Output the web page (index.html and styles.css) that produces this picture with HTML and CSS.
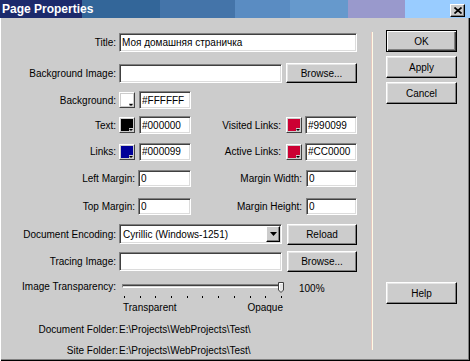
FILE: index.html
```html
<!DOCTYPE html>
<html lang="ru">
<head>
  <meta charset="UTF-8">
  <title>Page Properties</title>
  <link rel="stylesheet" href="styles.css">
</head>
<body>

  <div class="dialog">
    <div class="titlebar">
      <span class="title">Page Properties</span>
      <span class="close">
        <svg width="8" height="7" viewBox="0 0 8 7"><path d="M0.5 0.5L7.5 6.5M7.5 0.5L0.5 6.5" stroke="#000" stroke-width="1.7"/></svg>
      </span>
    </div>

    <div class="content">
      <div class="props">
        <label class="lbl">Title:</label>
        <input class="field title-field" value="Моя домашняя страничка">

        <label class="lbl">Background Image:</label>
        <input class="field path" value="">
        <button class="btn browse">Browse...</button>

        <label class="lbl">Background:</label>
        <span class="swatch"><span class="chip c-white"></span></span>
        <input class="field hex" value="#FFFFFF">

        <label class="lbl">Text:</label>
        <span class="swatch"><span class="chip c-black"></span></span>
        <input class="field hex" value="#000000">
        <label class="lbl lbl-r">Visited Links:</label>
        <span class="swatch swatch-r"><span class="chip c-red"></span></span>
        <input class="field hex hex-r" value="#990099">

        <label class="lbl">Links:</label>
        <span class="swatch"><span class="chip c-blue"></span></span>
        <input class="field hex" value="#000099">
        <label class="lbl lbl-r">Active Links:</label>
        <span class="swatch swatch-r"><span class="chip c-red"></span></span>
        <input class="field hex hex-r" value="#CC0000">

        <label class="lbl lbl-wide">Left Margin:</label>
        <input class="field num" value="0">
        <label class="lbl lbl-wide-r">Margin Width:</label>
        <input class="field num-r" value="0">

        <label class="lbl lbl-wide">Top Margin:</label>
        <input class="field num" value="0">
        <label class="lbl lbl-wide-r">Margin Height:</label>
        <input class="field num-r" value="0">

        <label class="lbl">Document Encoding:</label>
        <div class="field select">
          <span>Cyrillic (Windows-1251)</span>
          <span class="drop">
            <svg width="7" height="4" viewBox="0 0 7 4"><path d="M0 0H7L3.5 4Z" fill="#000"/></svg>
          </span>
        </div>
        <button class="btn side-btn">Reload</button>

        <label class="lbl">Tracing Image:</label>
        <input class="field path" value="">
        <button class="btn side-btn">Browse...</button>

        <label class="lbl">Image Transparency:</label>
        <div class="slider">
          <div class="track"></div>
          <div class="ticks">
            <span></span><span></span><span></span><span></span><span></span><span></span>
            <span></span><span></span><span></span><span></span><span></span>
          </div>
          <svg class="thumb" width="6" height="11" viewBox="0 0 6 11">
            <path d="M0.5 8V0.5H5.5V8L3 10.5Z" fill="#e4e4e4" stroke="#404040"/>
            <path d="M1.5 8V1.5H4.5" fill="none" stroke="#fff"/>
          </svg>
        </div>
        <span class="pct">100%</span>

        <div class="scale-labels">
          <span>Transparent</span>
          <span>Opaque</span>
        </div>

        <label class="lbl lbl-folder">Document Folder:</label>
        <span class="folder">E:\Projects\WebProjects\Test\</span>

        <label class="lbl lbl-folder">Site Folder:</label>
        <span class="folder">E:\Projects\WebProjects\Test\</span>
      </div>

      <div class="sep"></div>

      <div class="actions">
        <button class="btn btn-default">OK</button>
        <button class="btn">Apply</button>
        <button class="btn">Cancel</button>
        <button class="btn help">Help</button>
      </div>
    </div>
  </div>

</body>
</html>
```

FILE: styles.css
```css
body {
  margin: 0;
  font-family: "Liberation Sans", Arial, sans-serif;
  font-size: 10px;
  color: #000;
  background: #cccccc;
}

.dialog {
  width: 470px;
  height: 361px;
  background: #cccccc;
  display: flex;
  flex-direction: column;
  overflow: hidden;
}

.titlebar {
  height: 18px;
  display: flex;
  align-items: center;
  background: linear-gradient(to right,
    #1c2a6c 0 82px,
    #336699 82px 160px,
    #4474a9 160px 235px,
    #5a8cc2 235px 290px,
    #6699cc 290px 348px,
    #9999cc 348px 405px,
    #99ccff 405px);
}

.title {
  font-size: 12px;
  font-weight: bold;
  color: #fff;
  padding-left: 2px;
}

.close {
  margin-left: auto;
  margin-right: 5px;
  align-self: flex-end;
  margin-bottom: 1px;
  width: 15px;
  height: 13px;
  box-sizing: border-box;
  background: #cccccc;
  border: 1px solid;
  border-color: #fff #000 #000 #fff;
  box-shadow: inset -1px -1px 0 #808080;
  display: flex;
  align-items: center;
  justify-content: center;
}

.content {
  flex: 1;
  display: flex;
  align-items: flex-start;
  box-shadow: inset 1px 0 0 #fff, inset -1px -1px 0 #000, inset -2px -2px 0 #808080;
}

.props {
  display: grid;
  grid-template-columns: 119px 19px 53px 95px 19px 52px;
  grid-template-rows: 32px 30px 24px 26px 27px 27px 28px 28px 26px 24px 18px 26px 16px;
  margin-top: 8px;
  align-items: center;
}

.lbl {
  grid-column: 1;
  text-align: right;
  padding-right: 3px;
  white-space: nowrap;
}

.lbl-r { grid-column: 4; padding-right: 5px; }
.lbl-wide { grid-column: 1 / 3; }
.lbl-wide-r { grid-column: 4 / 6; }
.lbl-folder { padding-right: 1px; }

.field {
  box-sizing: border-box;
  height: 18px;
  margin: 0;
  padding: 0 0 0 2px;
  background: #fff;
  border: 1px solid;
  border-color: #808080 #fff #fff #808080;
  box-shadow: inset 1px 1px 0 #404040, inset -1px -1px 0 #dcdcdc;
  font: inherit;
  color: #000;
  outline: none;
}

.title-field {
  grid-column: 2 / 7;
  width: 238px;
  height: 19px;
}

.path {
  grid-column: 2 / 5;
  width: 163px;
  height: 19px;
}

.hex {
  grid-column: 3;
  width: 52px;
  justify-self: end;
}

.hex-r { grid-column: 6; justify-self: start; }

.num {
  grid-column: 3;
  width: 53px;
  height: 17px;
}

.num-r {
  grid-column: 6;
  width: 51px;
  height: 17px;
  justify-self: end;
}

.swatch {
  grid-column: 2;
  position: relative;
  width: 16px;
  height: 16px;
  box-sizing: border-box;
  padding: 1px;
  background: #cccccc;
  border: 1px solid;
  border-color: #fff #404040 #404040 #fff;
}

.swatch-r { grid-column: 5; }

.chip {
  display: block;
  width: 12px;
  height: 12px;
}

.swatch::after {
  content: "";
  position: absolute;
  right: 0;
  bottom: 0;
  width: 5px;
  height: 4px;
  background: #cccccc;
}

.swatch::before {
  content: "";
  position: absolute;
  right: 1px;
  bottom: 1px;
  width: 0;
  height: 0;
  border-left: 2px solid transparent;
  border-right: 2px solid transparent;
  border-top: 2px solid #000;
  z-index: 1;
}

.c-white { background: #fff; }
.c-black { background: #000; }
.c-blue { background: #000099; }
.c-red { background: #cc0033; }

.btn {
  box-sizing: border-box;
  height: 22px;
  margin: 0;
  padding: 0;
  background: #cccccc;
  border: 1px solid;
  border-color: #fff #000 #000 #fff;
  box-shadow: inset -1px -1px 0 #808080, inset 1px 1px 0 #e6e6e6;
  font: inherit;
  color: #000;
}

.browse {
  grid-column: 5 / 7;
  width: 71px;
  height: 20px;
  justify-self: end;
}

.side-btn {
  grid-column: 5 / 7;
  width: 70px;
  height: 21px;
  justify-self: end;
}

.select {
  grid-column: 2 / 5;
  width: 163px;
  height: 20px;
  display: flex;
  align-items: center;
  padding-left: 3px;
}

.drop {
  margin-left: auto;
  margin-right: 1px;
  width: 14px;
  height: 16px;
  box-sizing: border-box;
  background: #cccccc;
  border: 1px solid;
  border-color: #fff #000 #000 #fff;
  box-shadow: inset -1px -1px 0 #808080;
  display: flex;
  align-items: center;
  justify-content: center;
}

.slider {
  grid-column: 2 / 5;
  position: relative;
  height: 24px;
  box-sizing: border-box;
  padding-top: 10px;
}

.track {
  margin-left: 3px;
  width: 160px;
  height: 4px;
  box-sizing: border-box;
  border: 1px solid;
  border-color: #808080 #fff #fff #808080;
  background: linear-gradient(#404040 0 1px, #d8d8d8 1px);
}

.ticks {
  display: flex;
  justify-content: space-between;
  width: 158px;
  margin-top: 8px;
  padding-left: 5px;
}

.ticks span {
  width: 1px;
  height: 2px;
  background: #000;
}

.thumb {
  position: absolute;
  left: 159px;
  top: 8px;
}

.pct {
  grid-column: 5 / 7;
  padding-left: 13px;
  padding-top: 5px;
}

.scale-labels {
  grid-column: 2 / 5;
  display: flex;
  justify-content: space-between;
  padding: 0 3px 0 4px;
}

.folder {
  grid-column: 2 / 7;
  white-space: nowrap;
}

.sep {
  width: 0;
  height: 318px;
  margin: 14px 0 0 14px;
  border-left: 1px solid #e5c8c0;
  border-right: 1px solid #fffbe6;
}

.actions {
  display: flex;
  flex-direction: column;
  gap: 4px;
  width: 71px;
  margin: 12px 0 0 13px;
}

.btn-default {
  border: 1px solid #000;
  box-shadow: inset 1px 1px 0 #fff, inset -1px -1px 0 #404040, inset -2px -2px 0 #808080;
}

.help {
  margin-top: 174px;
}
```
